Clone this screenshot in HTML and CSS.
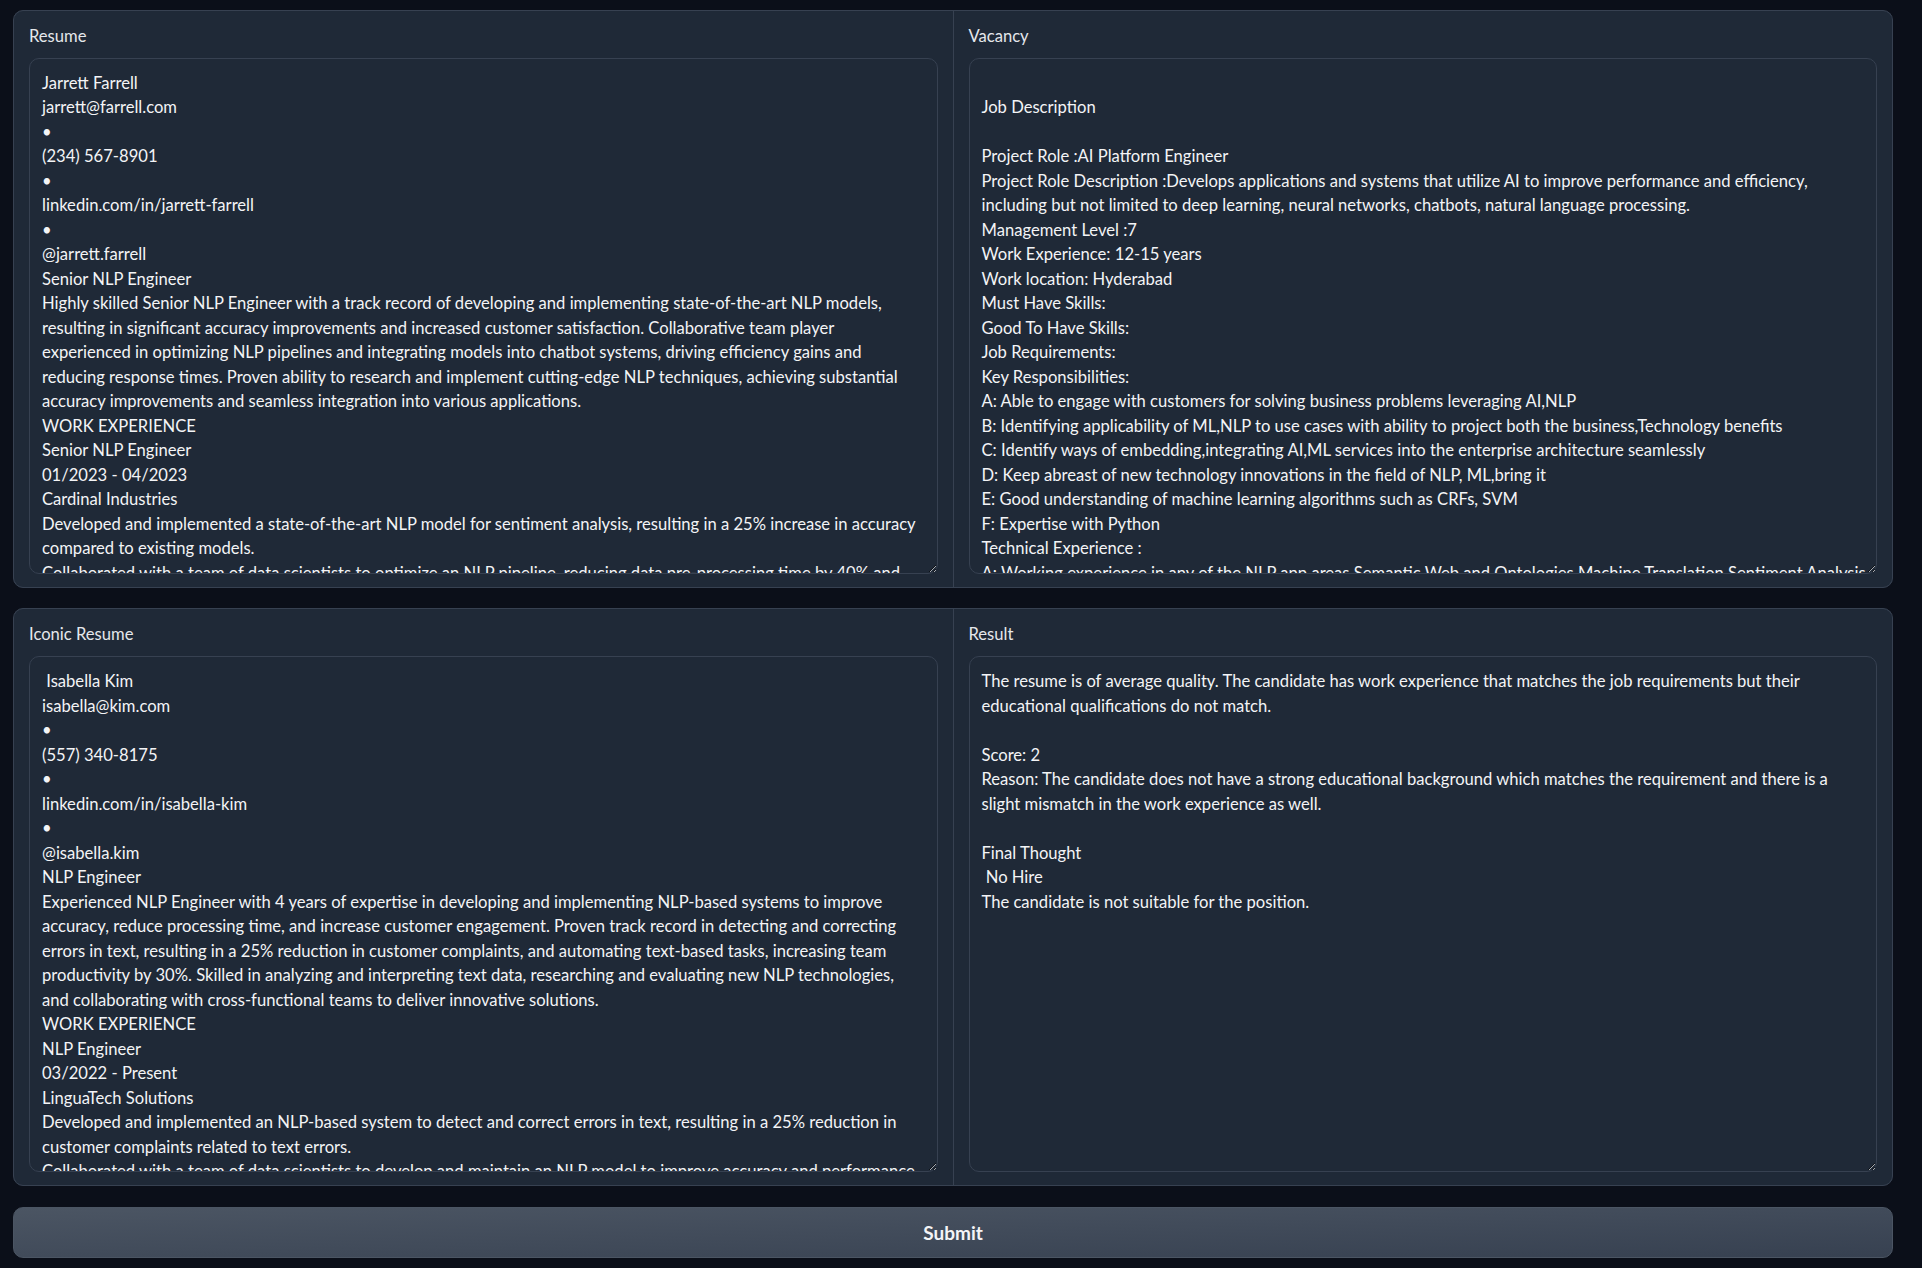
FILE: index.html
```html
<!DOCTYPE html>
<html lang="en">
<head>
<meta charset="utf-8">
<title>Resume Screening</title>
<link rel="stylesheet" href="styles.css">
</head>
<body>
<main class="app">
  <section class="panel">
    <div class="field">
      <label class="label" for="resume">Resume</label>
      <textarea id="resume" class="box" wrap="off" readonly>
Jarrett Farrell
jarrett@farrell.com
•
(234) 567-8901
•
linkedin.com/in/jarrett-farrell
•
@jarrett.farrell
Senior NLP Engineer
Highly skilled Senior NLP Engineer with a track record of developing and implementing state-of-the-art NLP models,
resulting in significant accuracy improvements and increased customer satisfaction. Collaborative team player
experienced in optimizing NLP pipelines and integrating models into chatbot systems, driving efficiency gains and
reducing response times. Proven ability to research and implement cutting-edge NLP techniques, achieving substantial
accuracy improvements and seamless integration into various applications.
WORK EXPERIENCE
Senior NLP Engineer
01/2023 - 04/2023
Cardinal Industries
Developed and implemented a state-of-the-art NLP model for sentiment analysis, resulting in a 25% increase in accuracy
compared to existing models.
Collaborated with a team of data scientists to optimize an NLP pipeline, reducing data pre-processing time by 40% and
improving overall efficiency.</textarea>
    </div>
    <div class="field">
      <label class="label" for="vacancy">Vacancy</label>
      <textarea id="vacancy" class="box" wrap="off" readonly>

Job Description

Project Role :AI Platform Engineer
Project Role Description :Develops applications and systems that utilize AI to improve performance and efficiency,
including but not limited to deep learning, neural networks, chatbots, natural language processing.
Management Level :7
Work Experience: 12-15 years
Work location: Hyderabad
Must Have Skills:
Good To Have Skills:
Job Requirements:
Key Responsibilities:
A: Able to engage with customers for solving business problems leveraging AI,NLP
B: Identifying applicability of ML,NLP to use cases with ability to project both the business,Technology benefits
C: Identify ways of embedding,integrating AI,ML services into the enterprise architecture seamlessly
D: Keep abreast of new technology innovations in the field of NLP, ML,bring it
E: Good understanding of machine learning algorithms such as CRFs, SVM
F: Expertise with Python
Technical Experience :
A: Working experience in any of the NLP app areas Semantic Web and Ontologies Machine Translation Sentiment Analysis</textarea>
    </div>
  </section>

  <section class="panel">
    <div class="field">
      <label class="label" for="iconic">Iconic Resume</label>
      <textarea id="iconic" class="box" wrap="off" readonly>
 Isabella Kim
isabella@kim.com
•
(557) 340-8175
•
linkedin.com/in/isabella-kim
•
@isabella.kim
NLP Engineer
Experienced NLP Engineer with 4 years of expertise in developing and implementing NLP-based systems to improve
accuracy, reduce processing time, and increase customer engagement. Proven track record in detecting and correcting
errors in text, resulting in a 25% reduction in customer complaints, and automating text-based tasks, increasing team
productivity by 30%. Skilled in analyzing and interpreting text data, researching and evaluating new NLP technologies,
and collaborating with cross-functional teams to deliver innovative solutions.
WORK EXPERIENCE
NLP Engineer
03/2022 - Present
LinguaTech Solutions
Developed and implemented an NLP-based system to detect and correct errors in text, resulting in a 25% reduction in
customer complaints related to text errors.
Collaborated with a team of data scientists to develop and maintain an NLP model to improve accuracy and performance
of text processing.</textarea>
    </div>
    <div class="field">
      <label class="label" for="result">Result</label>
      <textarea id="result" class="box" wrap="off" readonly>
The resume is of average quality. The candidate has work experience that matches the job requirements but their
educational qualifications do not match.

Score: 2
Reason: The candidate does not have a strong educational background which matches the requirement and there is a
slight mismatch in the work experience as well.

Final Thought
 No Hire
The candidate is not suitable for the position.</textarea>
    </div>
  </section>

  <button class="submit" type="button">Submit</button>
</main>
</body>
</html>
```
FILE: styles.css
```css
html, body {
  margin: 0;
  background: #0b0f19;
  color-scheme: dark;
}

body {
  font-family: Lato, "Open Sans", sans-serif;
  color: #f3f4f6;
}

.app {
  display: flex;
  flex-direction: column;
  gap: 20.5px;
  padding: 9.5px 29px 0 13px;
}

.panel {
  display: grid;
  grid-template-columns: 1fr 1fr;
  gap: 1px;
  background: #374151;
  border: 1px solid #374151;
  border-radius: 10px;
  overflow: hidden;
}

.field {
  display: flex;
  flex-direction: column;
  background: #1f2937;
  padding: 15px 15px 13px;
}

.label {
  font-size: 16.6px;
  line-height: 20px;
  color: #e5e7eb;
  margin-bottom: 12px;
}

.box {
  display: block;
  box-sizing: border-box;
  width: 100%;
  height: 516px;
  margin: 0;
  padding: 12px;
  border: 1px solid #374151;
  border-radius: 10px;
  background: #1f2937;
  color: #f3f4f6;
  font-family: Lato, "Open Sans", sans-serif;
  font-size: 16.6px;
  line-height: 24.5px;
  white-space: pre;
  overflow: hidden;
  resize: vertical;
  outline: none;
}

.submit {
  display: block;
  width: 100%;
  height: 51px;
  border: 1px solid #4b5563;
  border-radius: 10px;
  background: linear-gradient(to bottom right, #4b5563, #374151);
  color: #f3f4f6;
  font-family: Lato, "Open Sans", sans-serif;
  font-size: 19px;
  font-weight: 700;
  cursor: pointer;
}
```
